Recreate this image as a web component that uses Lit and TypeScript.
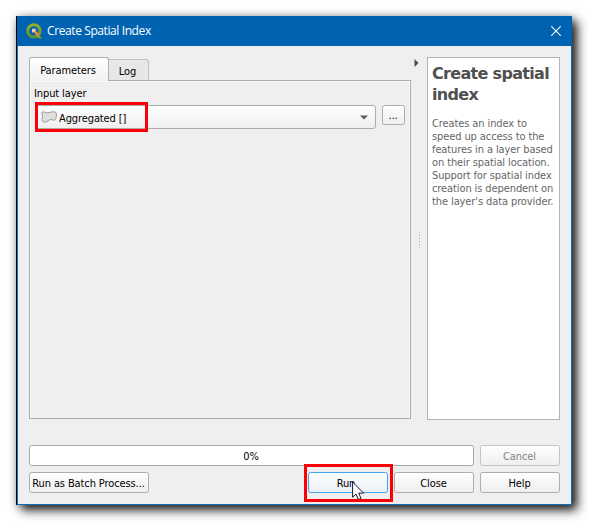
import { LitElement, html, css, svg } from "lit";
import { customElement, property } from "lit/decorators.js";

const qgisLogo = svg`
  <defs><linearGradient id="ring" x1="0" y1="0" x2="0" y2="1">
    <stop offset="0" stop-color="#93b023"/><stop offset="1" stop-color="#589632"/>
  </linearGradient></defs>
  <circle cx="7.9" cy="7.9" r="6.2" fill="none" stroke="url(#ring)" stroke-width="3"/>
  <path d="M10.8 9.6 L16.2 15.2 L12.4 15.4 L9 11.6Z" fill="#6fa52d"/>
  <path d="M6.2 6.2 H9.8 L9.8 7.8 L13.8 11.8 L12 13.4 L8.1 9.5 L6.2 9.6Z" fill="#e98a3c"/>
  <path d="M6 5.8 H9.8 L9 8.6 L6.1 9.6Z" fill="#f0d3b4"/>`;

@customElement("dialog-button")
export class DialogButton extends LitElement {
  @property() label = "";
  static styles = css`
    :host { display: block; width: 80px; height: 21px; }
    .face {
      box-sizing: border-box; width: 100%; height: 100%; padding-right: 1px;
      display: flex; align-items: center; justify-content: center;
      border: 1px solid #adadad; border-radius: 2.5px;
      background: linear-gradient(#fefefe, #efefef);
      white-space: nowrap;
    }
    :host([disabled]) .face { color: #858585; border-color: #c3c3c3; }
    :host([focused]) .face { border-color: #3ea5ef; background: linear-gradient(#fdfeff, #ebeff5); padding-right: 4px; }
    span { padding-top: 1px; }
  `;
  render() {
    return html`<div class="face"><span>${this.label}</span></div>`;
  }
}

@customElement("app-root")
export class AppRoot extends LitElement {
  static styles = css`
    :host {
      display: block; box-sizing: border-box; width: 589px; height: 522px;
      padding: 16px 0 0 16px; background: #fff; overflow: hidden; color: #000;
      font: 11px/13px "DejaVu Sans Condensed", "DejaVu Sans", sans-serif;
      font-stretch: condensed; letter-spacing: -0.11px;
    }
    .window {
      position: relative; box-sizing: border-box; width: 556px; height: 489px;
      border-left: 1px solid #000; background: #efefef;
      box-shadow: 5px 5px 10px rgba(0, 0, 0, 0.9), 0 0 8px rgba(0, 0, 0, 0.2);
    }
    .frame {
      box-sizing: border-box; width: 555px; height: 489px;
      border: 1px solid #0e6fba; border-top: 0;
      display: flex; flex-direction: column;
    }
    .title {
      height: 30px; flex: none; margin: 0 -1px; padding: 0 11px 0 9px; background: #0063b1; color: #fff;
      display: flex; align-items: center;
      font: 12px/16px "Open Sans", "Noto Sans", sans-serif;
    }
    .title span { flex: 1; margin-left: 4px; letter-spacing: -0.4px; }
    svg { display: block; flex: none; }
    .main { display: flex; padding: 11px 11px 0; height: 363px; flex: none; }
    .left { width: 382px; display: flex; flex-direction: column; }
    .tabs { display: flex; align-items: flex-end; height: 23px; }
    .tab {
      box-sizing: border-box; width: 40px; height: 21px; padding: 5px 2px 0 0; text-align: center;
      border: 1px solid #c0c0c0; border-left: 0; border-bottom: 0;
      border-radius: 0 3px 0 0; background: #e7e7e7;
    }
    .tab.active {
      width: 80px; height: 24px; padding-top: 6px; margin-bottom: -1px; position: relative;
      border: 1px solid #b0b0b0; border-bottom: 0; border-radius: 3px 3px 0 0;
      background: linear-gradient(#fff, #f1f1f1);
    }
    .pane {
      box-sizing: border-box; height: 339px; border: 1px solid #adadad;
      box-shadow: inset 0 1px #fafafa, inset 1px 0 #fafafa, inset -1px 0 #fafafa;
      padding: 6px 5px 0;
    }
    .pane label { display: block; height: 18px; margin-left: -1px; }
    .inputs { display: flex; gap: 6px; position: relative; }
    .combo {
      box-sizing: border-box; width: 341px; height: 24px; padding: 0 7px 0 5px;
      display: flex; align-items: center;
      border: 1px solid #adadad; border-radius: 3px;
      background: linear-gradient(#fefefe, #efefef);
    }
    .combo span { flex: 1; margin-left: 2px; padding-top: 2px; }
    .browse { width: 23px; height: 20px; }
    .mark { position: absolute; border: 3px solid #fb0007; box-sizing: border-box; }
    .mark.layer { left: 0; top: -3px; width: 113px; height: 30px; }
    .mark.action { left: -4px; top: -8px; width: 89px; height: 38px; }
    .splitter { width: 16px; position: relative; }
    .arrow { margin: 2px 0 0 3px; }
    .grip {
      position: absolute; left: 8px; top: 175px; width: 1px; height: 16px;
      background: repeating-linear-gradient(#b0b0b0 0 1px, transparent 1px 3px);
    }
    .help {
      box-sizing: border-box; width: 133px; border: 1px solid #b4b4b4; background: #fff;
      padding: 5px 0 0 4px; color: #666; white-space: nowrap;
    }
    h1 {
      margin: 0 0 12px; font: bold 16px/21px "DejaVu Sans", sans-serif; font-stretch: normal;
      color: #4f4f4f; letter-spacing: -0.68px;
    }
    p { margin: 0; letter-spacing: -0.1px; }
    .foot {
      display: grid; grid-template-columns: 273px 80px 80px 80px; gap: 6px;
      padding: 25px 11px 0; grid-auto-rows: 21px;
    }
    .progress {
      grid-column: 1 / 4; width: 445px; box-sizing: border-box; padding: 1px 1px 0 0;
      border: 1px solid #a8a8a8; border-radius: 2.5px; background: #fff;
      display: flex; align-items: center; justify-content: center;
    }
    .batch { width: 120px; }
    .spot { position: relative; }
    .cursor { position: absolute; left: 44px; top: 9px; }
  `;

  render() {
    return html`
      <div class="window"><div class="frame">
        <div class="title">
          <svg width="17" height="17" viewBox="0 0 17 17">${qgisLogo}</svg>
          <span>Create Spatial Index</span>
          <svg width="10" height="10" viewBox="0 0 10 10"><path d="M.3 .3 9.7 9.7M9.7 .3 .3 9.7" stroke="#fff" stroke-width="1.1"/></svg>
        </div>
        <div class="main">
          <div class="left">
            <div class="tabs"><div class="tab active">Parameters</div><div class="tab">Log</div></div>
            <div class="pane">
              <label>Input layer</label>
              <div class="inputs">
                <div class="combo">
                  <svg width="16" height="12" viewBox="0 0 16 12"><path d="M1.2 1 C3.5 .2 4.4 2.2 7 1.8 C10 1.2 11 .5 13.6 .9 C15.6 1.2 15.6 3 15.3 5.4 C15 8.5 14 10 11.5 8.8 C9 8 8.5 9.2 6.8 10.2 C5 11.4 2.4 11.4 1.3 10 C.3 8.4 1.8 7 1.5 5 C1.3 3.6 .2 1.8 1.2 1Z" fill="#dedede" stroke="#929292" stroke-width=".9"/></svg>
                  <span>Aggregated []</span>
                  <svg width="8" height="5" viewBox="0 0 8 5"><path d="M0 .5H8L4 4.5Z" fill="#5b5b5b"/></svg>
                </div>
                <dialog-button class="browse" label="..."></dialog-button>
                <div class="mark layer"></div>
              </div>
            </div>
          </div>
          <div class="splitter">
            <svg class="arrow" width="5" height="8" viewBox="0 0 5 8"><path d="M.5 0 4.5 4 .5 8Z" fill="#4d4d4d"/></svg>
            <div class="grip"></div>
          </div>
          <div class="help">
            <h1>Create spatial<br>index</h1>
            <p>Creates an index to<br>speed up access to the<br>features in a layer based<br>on their spatial location.<br>Support for spatial index<br>creation is dependent on<br>the layer's data provider.</p>
          </div>
        </div>
        <div class="foot">
          <div class="progress">0%</div>
          <dialog-button label="Cancel" disabled></dialog-button>
          <dialog-button class="batch" label="Run as Batch Process..."></dialog-button>
          <div class="spot">
            <dialog-button label="Run" focused></dialog-button>
            <svg class="cursor" width="13" height="20" viewBox="0 0 13 20"><path d="M.6 1 V16.2 L4 13 L6.4 18.5 L9 17.3 L6.7 12.1 H11.6Z" fill="#fff" stroke="#16162a" stroke-width="1"/></svg>
            <div class="mark action"></div>
          </div>
          <dialog-button label="Close"></dialog-button>
          <dialog-button label="Help"></dialog-button>
        </div>
      </div></div>`;
  }
}
